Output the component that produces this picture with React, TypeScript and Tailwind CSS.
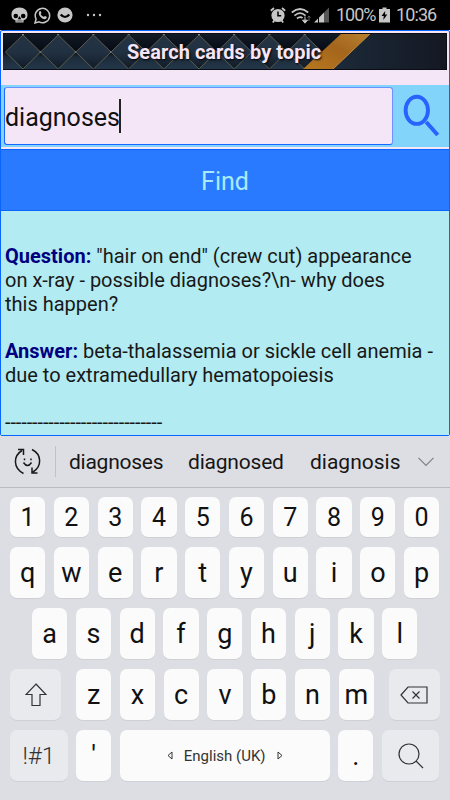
import { useState } from "react";

const numberRow = ["1", "2", "3", "4", "5", "6", "7", "8", "9", "0"]
const topRow = ["q", "w", "e", "r", "t", "y", "u", "i", "o", "p"]
const homeRow = ["a", "s", "d", "f", "g", "h", "j", "k", "l"]
const bottomRow = ["z", "x", "c", "v", "b", "n", "m"]
const columns = [23, 58.2, 93.4, 128.6, 163.8, 199, 234.2, 269.4, 304.6]

function StatusBar() {
    return <header className="flex h-[30px] items-center justify-between bg-black pl-[11px] pr-[13px] text-[#c6c6c6]">
        <div className="flex items-center">
            <svg width="17" height="17" viewBox="0 0 17 17" className="mr-[6px]">
                <path d="M8.5.5C3.6.5.5 3.5.5 7.5c0 2.2.5 4.6 2.8 5.3l1.2.6v2.2h8v-2.2l1.2-.6c2.3-.7 2.8-3.1 2.8-5.3 0-4-3.1-7-8-7z" fill="#c6c6c6" />
                <circle cx="4.8" cy="9" r="2.3" fill="#000" />
                <circle cx="12.2" cy="9" r="2.3" fill="#000" />
                <path d="M8.5 9.5l-1.3 2.6h2.6zM5.5 14h6" fill="#000" stroke="#000" strokeWidth=".6" />
            </svg>
            <svg width="17" height="17" viewBox="0 0 17 17" className="mr-[6px]">
                <path d="M1 16l1.1-4A7.2 7.2 0 1 1 5 14.9z" fill="none" stroke="#c6c6c6" strokeWidth="1.5" />
                <path d="M5.6 4.2c.6-.5 1-.3 1.2.2l.6 1.3c.2.6-.7 1-.7 1.4.6 1.3 1.6 2.2 2.9 2.7.5.1.9-1.1 1.4-.9l1.6.8c.5.3 0 1.7-.7 2.1-1.1.7-2.5.2-3.7-.4C6.1 10.1 3.500 6.500 5.600 4.200z" fill="#c6c6c6" />
            </svg>
            <svg width="16" height="16" viewBox="0 0 16 16">
                <circle cx="8" cy="8" r="7.6" fill="#c6c6c6" />
                <path d="M3.7 7.500Q8 12.500 12.300 7.500" fill="none" stroke="#000" strokeWidth="2.200" />
            </svg>
            <svg width="16" height="4" viewBox="0 0 16 4" className="ml-[13px]">
                <circle cx="2" cy="2" r="1.200" fill="#c6c6c6" />
                <circle cx="8" cy="2" r="1.200" fill="#c6c6c6" />
                <circle cx="14" cy="2" r="1.200" fill="#c6c6c6" />
            </svg>
        </div>
        <div className="flex items-center">
            <svg width="16" height="16" viewBox="0 0 16 16" className="mr-[5px]">
                <circle cx="8" cy="8.500" r="6.600" fill="#c6c6c6" />
                <path d="M.8 3.800L4 1M12 1l3.200 2.800M2.800 15.500l1.500-2M13.200 15.500l-1.500-2" stroke="#c6c6c6" strokeWidth="1.800" />
                <path d="M8 4.500v4.300h3.200" fill="none" stroke="#000" strokeWidth="1.500" />
            </svg>
            <svg width="39" height="17" viewBox="0 0 39 17" className="mr-[6px]">
                <path d="M.8 5.500Q9 -1.500 17.200 5.500M3.500 8.600Q9 3.800 14.500 8.600M6 11.500Q9 9 11.500 11" fill="none" stroke="#c6c6c6" strokeWidth="1.700" />
                <path d="M11.500 13.200h5L14 16.200zM14 9.500v4" fill="#c6c6c6" stroke="#c6c6c6" />
                <path d="M18 14v-5M16.500 10.500L18 9l1.500 1.500" fill="none" stroke="#666" />
                <path d="M23 15.500l4-4v4zM28 15.500v-5l5-5v10z" fill="#c6c6c6" />
                <path d="M33 15.500V5.500L38 .5v15z" fill="#555" />
            </svg>
            <span className="mr-[4px] w-[39px] whitespace-nowrap text-[18px] leading-[30px] tracking-[-1px]">100%</span>
            <svg width="11" height="16" viewBox="0 0 11 16" className="mr-[6px]">
                <path d="M3.500.5h4V2H11v13.500H0V2h3.500z" fill="#c6c6c6" />
                <path d="M6.200 4L2.500 9h2.300l-.5 4 4-5.500H6z" fill="#000" />
            </svg>
            <span className="w-[41px] whitespace-nowrap text-[18px] leading-[30px] tracking-[-0.900px]">10:36</span>
        </div>
    </header>
}

function Banner() {
    return <div className="relative h-[37px] overflow-hidden bg-[#101723]">
        <svg width="444" height="37" viewBox="3 33 444 37" className="block">
            <defs>
                <linearGradient id="tile" x1="0" y1="0" x2="0" y2="1">
                    <stop offset="0" stopColor="#243445" />
                    <stop offset=".5" stopColor="#223142" />
                    <stop offset="1" stopColor="#101a26" />
                </linearGradient>
                <linearGradient id="dark" x1="0" y1="0" x2="0" y2="1">
                    <stop offset="0" stopColor="#111b28" />
                    <stop offset=".5" stopColor="#070b12" />
                    <stop offset=".65" stopColor="#1c2b3a" />
                    <stop offset="1" stopColor="#23384b" />
                </linearGradient>
                <linearGradient id="plain" x1="0" y1="0" x2="1" y2="0">
                    <stop offset="0" stopColor="#1c2a39" />
                    <stop offset="1" stopColor="#141823" />
                </linearGradient>
                <linearGradient id="gold" x1="0" y1="1" x2="1" y2="0">
                    <stop offset="0" stopColor="#b8791f" />
                    <stop offset=".55" stopColor="#a4651d" />
                    <stop offset="1" stopColor="#b9832f" />
                </linearGradient>
            </defs>
            <rect x="3" y="33" width="444" height="37" fill="url(#dark)" />
            {columns.map(x => (
                <g key={x}>
                    <path d={`M${x} 35l17.600 17-17.600 17-17.600-17z`} fill="url(#tile)" stroke="#5a5b4c" strokeWidth="1" />
                    <path d={`M${x - 2} 33l2 2 2-2M${x - 2} 71l2-2 2 2`} fill="none" stroke="#8b897a" strokeWidth="1" />
                    <circle cx={x + 17.600} cy="52" r="1.100" fill="#85877b" />
                </g>
            ))}
            <path d="M332 70L371 33h76v37z" fill="url(#plain)" />
            <path d="M302 70L342 33h29L332 70z" fill="url(#gold)" />
            <path d="M332 70L371 33" stroke="#bd8b38" strokeWidth="1" />
            <path d="M3 33.500h444M446.500 33v37M3 69.500h444" stroke="#0b0d14" strokeWidth="1" />
        </svg>
        <h1 className="absolute inset-0 pl-[124px] pt-px text-[20px] font-bold leading-[37px] tracking-[0.050px] text-[#f6e5f6] whitespace-nowrap [text-shadow:1px_1px_2px_#000]">Search cards by topic</h1>
    </div>
}

function SearchForm() {
    const [topic, setTopic] = useState('diagnoses')

    return <form onSubmit={e => e.preventDefault()}>
        <div className="flex h-[62px] bg-[#83d4fb] pl-[3px] pt-[2px]">
            <label className="flex h-[58px] w-[389px] shrink-0 items-center rounded-[3px] border border-[#1768ff] border-t-[#6c93ff] border-r-[#6c93ff] bg-[#f4e6f6]">
                <input
                    value={topic}
                    onChange={(e) => setTopic(e.target.value)}
                    type="text"
                    className="mt-[3px] w-[114px] bg-transparent text-[25px] leading-[30px] text-[#111] outline-none"
                />
                <span className="h-[34px] w-[2px] bg-[#222]" />
            </label>
            <svg width="38" height="44" viewBox="0 0 38 44" className="ml-[10px] mt-[7px] shrink-0">
                <ellipse cx="13.800" cy="16.300" rx="11.200" ry="13.600" fill="none" stroke="#2862ff" strokeWidth="3.900" />
                <path d="M23.200 28L34.700 41" stroke="#2862ff" strokeWidth="4" />
            </svg>
        </div>
        <button className="mt-[2px] h-[62px] w-full border-y border-[#0866ff] bg-[#297aff] pt-[3px] text-[25px] leading-[30px] text-[#a9eafa]">Find</button>
    </form>
}

function Result() {
    return <section className="h-[224px] bg-[#b2ebf2] pl-[4px] pt-[34px] text-[20px] leading-[23.800px] text-[#181818] whitespace-nowrap">
        <p>
            <b className="text-[#000080]">Question:</b> "hair on end" (crew cut) appearance<br />
            on x-ray - possible diagnoses?\n- why does<br />
            this happen?
        </p>
        <p className="mt-[23.800px]">
            <b className="text-[#000080]">Answer:</b> beta-thalassemia or sickle cell anemia -<br />
            due to extramedullary hematopoiesis
        </p>
        <p className="mt-[23px] tracking-[-0.110px]">-----------------------------</p>
    </section>
}

function Suggestions() {
    return <div className="flex h-[52px] items-center border-b border-[#babbc0] text-[21px] text-[#161616]">
        <svg width="27" height="27" viewBox="0 0 27 27" className="ml-[14px] shrink-0" fill="none" stroke="#181818" strokeWidth="1.500">
            <path d="M9.500 25.500C-1 20-1 8 8 2.500M4 1.500h5.500V7M18 1.500c10 5 10 17 1 22.500M18 19.500v5.500h5.500" />
            <path d="M9.500 14.500q4 6 8 0M10.500 10.500v1.800M17 10.500v1.800" />
        </svg>
        <span className="ml-[14px] h-[31px] w-px bg-[#c1c2c6]" />
        <span className="ml-[13px] w-[119px] pt-[2px] tracking-[-0.250px]">diagnoses</span>
        <span className="w-[122px] pt-[2px] tracking-[-0.200px]">diagnosed</span>
        <span className="w-[108px] pt-[2px]">diagnosis</span>
        <svg width="16" height="10" viewBox="0 0 16 10" fill="none" stroke="#808185" strokeWidth="1.200">
            <path d="M.5.8L8 8.500 15.500.8" />
        </svg>
    </div>
}

function Key({ label, short }: { label: string; short?: boolean }) {
    return <button className={short
        ? "h-[40px] w-[35.200px] rounded-[7px] bg-[#fbfbfb] pt-px text-[25px] leading-[39px] text-[#111] shadow-[0_1px_0_#cfd0d4]"
        : "h-[51px] w-[35.200px] rounded-[7px] bg-[#fbfbfb] pt-px text-[27px] leading-[50px] text-[#111] shadow-[0_1px_0_#cfd0d4]"
    }>
        {label}
    </button>
}

function Keyboard() {
    return <div className="h-[364px] bg-[#dddee3]">
        <Suggestions />
        <div className="flex flex-col gap-[10px] pl-[10px] pt-[9px]">
            <div className="flex gap-[8.600px]">
                {numberRow.map(key => <Key key={key} label={key} short />)}
            </div>
            <div className="flex gap-[8.600px]">
                {topRow.map(key => <Key key={key} label={key} />)}
            </div>
            <div className="flex gap-[8.600px] pl-[22px]">
                {homeRow.map(key => <Key key={key} label={key} />)}
            </div>
            <div className="flex">
                <button className="flex h-[51px] w-[51px] items-center justify-center rounded-[7px] bg-[#e9eaee] shadow-[0_1px_0_#cfd0d4]">
                    <svg width="22" height="24" viewBox="0 0 22 24" fill="none" stroke="#333" strokeWidth="1.200">
                        <path d="M11 1L21 11.500h-6V22.500H7V11.500H1z" />
                    </svg>
                </button>
                <div className="ml-[15px] mr-[15px] flex gap-[8.600px]">
                    {bottomRow.map(key => <Key key={key} label={key} />)}
                </div>
                <button className="flex h-[51px] w-[51px] items-center justify-center rounded-[7px] bg-[#e9eaee] shadow-[0_1px_0_#cfd0d4]">
                    <svg width="28" height="18" viewBox="0 0 28 18" fill="none" stroke="#333" strokeWidth="1.200">
                        <path d="M1 9L8 1h19v16H8zM12.500 5.500l7 7M19.500 5.500l-7 7" />
                    </svg>
                </button>
            </div>
            <div className="flex gap-[8.500px]">
                <button className="h-[51px] w-[57.500px] rounded-[7px] bg-[#e9eaee] pt-px text-[24px] font-light leading-[50px] text-[#333] shadow-[0_1px_0_#cfd0d4]">!#1</button>
                <Key label="'" />
                <button className="flex h-[51px] w-[210px] items-center justify-center rounded-[7px] bg-[#fbfbfb] text-[15px] text-[#333] shadow-[0_1px_0_#cfd0d4]">
                    <svg width="6" height="9" viewBox="0 0 6 9" fill="none" stroke="#333">
                        <path d="M5 1L1 4.500 5 8z" />
                    </svg>
                    <span className="mx-[11px] pt-[2px]">English (UK)</span>
                    <svg width="6" height="9" viewBox="0 0 6 9" fill="none" stroke="#333">
                        <path d="M1 1l4 3.500L1 8z" />
                    </svg>
                </button>
                <Key label="." />
                <button className="flex h-[51px] w-[57.500px] items-center justify-center rounded-[7px] bg-[#e9eaee] shadow-[0_1px_0_#cfd0d4]">
                    <svg width="26" height="26" viewBox="0 0 26 26" fill="none" stroke="#333" strokeWidth="1.200">
                        <circle cx="11" cy="11" r="10" />
                        <path d="M18 18l7 7" />
                    </svg>
                </button>
            </div>
        </div>
    </div>
}

export default function App() {
    return <div className="h-[800px] w-[450px] overflow-hidden bg-[#dddee3] font-['Roboto',sans-serif]">
        <StatusBar />
        <main className="h-[406px] rounded-[2px] border border-[#0866ff] bg-[#f4e6f6]">
            <div className="px-[2px] pb-[15px] pt-[2px]">
                <Banner />
            </div>
            <SearchForm />
            <Result />
        </main>
        <Keyboard />
    </div>
}
